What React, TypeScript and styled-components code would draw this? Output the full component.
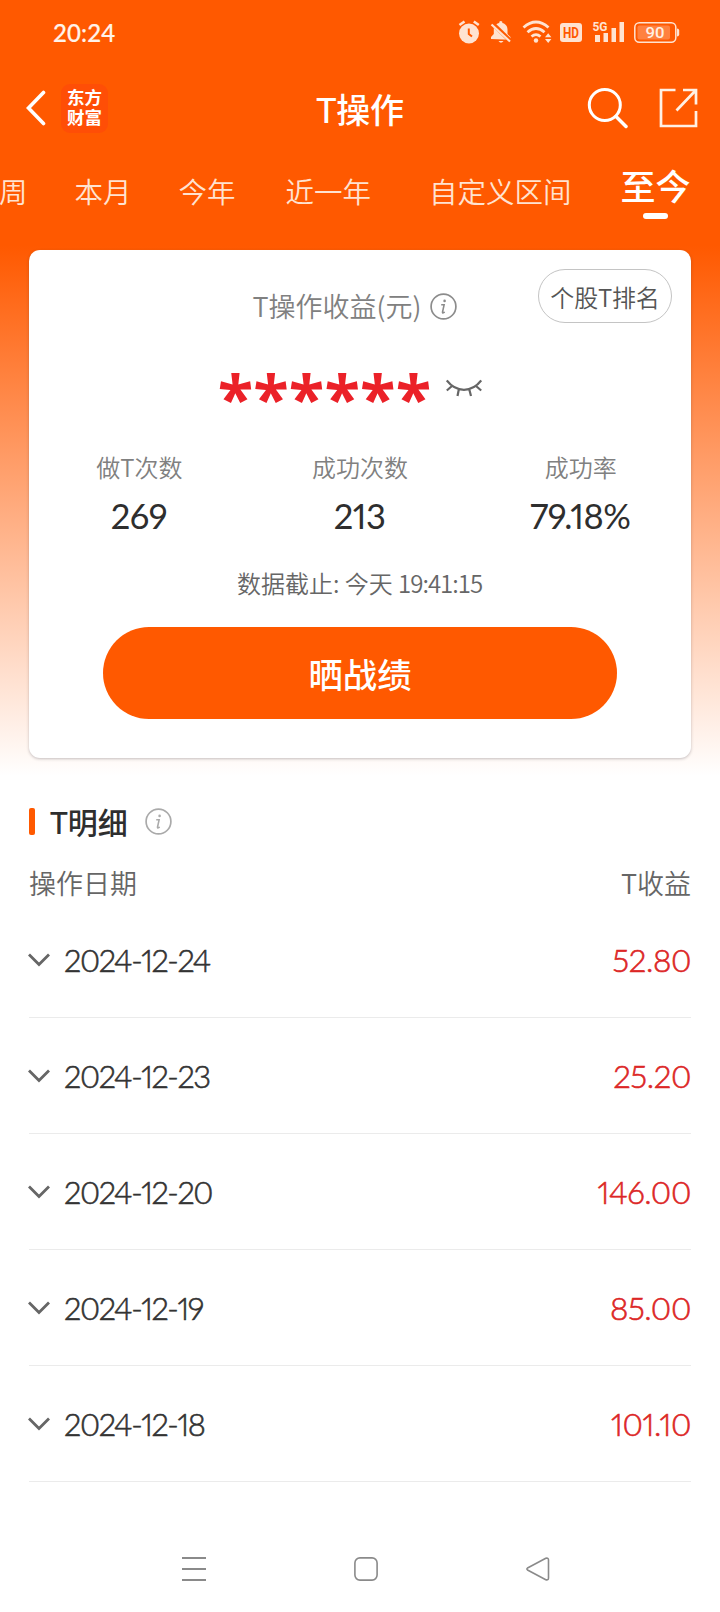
import React from 'react';
import styled, { createGlobalStyle } from 'styled-components';

const ORANGE = '#ff5900';
const TINT = '#ffe3d1';

const GlobalStyle = createGlobalStyle`
  * { box-sizing: border-box; }
  html, body { margin: 0; padding: 0; background: #fff; }
  body { font-family: Lato, "Noto Sans CJK SC", sans-serif; color: #333; }
  svg { display: block; flex: none; }
`;

const Page = styled.main`
  display: flex;
  flex-direction: column;
  width: 720px;
  height: 1612px;
  overflow: hidden;
  background: linear-gradient(to bottom, ${ORANGE} 0, ${ORANGE} 246px, #fff 776px);
  white-space: nowrap;
`;

const StatusBar = styled.div`
  display: flex;
  align-items: center;
  justify-content: space-between;
  height: 66px;
  padding: 0 40px 0 53px;
`;

const Clock = styled.span`
  margin-top: -2px;
  color: #fff3ea;
  font-size: 24px;
  font-weight: 500;
  letter-spacing: 0.1px;
  -webkit-text-stroke: 0.2px #fff3ea;
`;

const TopBar = styled.header`
  display: grid;
  grid-template-columns: 1fr auto 1fr;
  align-items: center;
  height: 84px;
  padding: 0 22px 0 26px;
`;

const TopLeft = styled.div`
  display: flex;
  align-items: center;
  gap: 15px;
`;

const Logo = styled.div`
  display: flex;
  flex-direction: column;
  align-items: center;
  width: 47px;
  height: 49px;
  padding-top: 3px;
  border-radius: 9px;
  background: #ff4e06;
`;

const LogoLine = styled.span`
  height: 20px;
  color: #fff;
  font: 700 17.5px/20px "Noto Sans CJK SC", sans-serif;
`;

const Title = styled.h1`
  margin: 3px 4px 0 0;
  color: #fff;
  font-size: 34px;
  font-weight: 500;
  line-height: 44px;
  letter-spacing: -0.3px;
`;

const TopRight = styled.div`
  display: flex;
  align-items: center;
  justify-content: flex-end;
  gap: 31px;
`;

const Tabs = styled.nav`
  display: flex;
  height: 100px;
  margin-left: -1px;
`;

const Tab = styled.button<{ $before: number }>`
  flex: none;
  height: 84px;
  margin: 0 0 0 ${(p) => p.$before}px;
  padding: 0;
  border: 0;
  background: none;
  color: ${TINT};
  font: 350 28.5px/83px Lato, "Noto Sans CJK SC", sans-serif;
`;

const ActiveTab = styled(Tab)`
  display: flex;
  flex-direction: column;
  align-items: center;
  color: #fff;
  font-size: 35px;
  font-weight: 500;
  line-height: 73px;
  &::after {
    content: '';
    width: 25px;
    height: 6px;
    margin-top: -10px;
    border-radius: 3px;
    background: #fff;
  }
`;

const Card = styled.section`
  position: relative;
  display: flex;
  flex-direction: column;
  align-items: center;
  height: 508px;
  margin: 0 29px;
  border-radius: 11px;
  background: #fff;
  box-shadow: 0 1px 3px rgba(60, 50, 60, 0.3);
`;

const RankButton = styled.button`
  position: absolute;
  top: 19px;
  right: 19px;
  width: 134px;
  height: 54px;
  padding: 2px 0 0;
  border: 1px solid #c4c4c4;
  border-radius: 27px;
  background: #fff;
  color: #555;
  font: 350 24px/50px "Noto Sans CJK SC", sans-serif;
  letter-spacing: -0.2px;
`;

const ProfitLabel = styled.div`
  display: flex;
  align-items: center;
  gap: 9px;
  height: 40px;
  margin: 36px 0 0 -10px;
  color: #808080;
  font: 350 27px/42px "Noto Sans CJK SC", sans-serif;
`;

const Masked = styled.div`
  display: flex;
  align-items: center;
  gap: 15px;
  height: 60px;
  margin: 23px 0 0 -20px;
  svg { margin-top: 18px; }
`;

const Stars = styled.span`
  height: 60px;
  color: #eb2128;
  font: 680 65px/96px "Open Sans", sans-serif;
  letter-spacing: 0.2px;
`;

const Stats = styled.div`
  display: grid;
  grid-template-columns: repeat(3, 1fr);
  width: 100%;
  margin-top: 40px;
`;

const Stat = styled.div`
  display: flex;
  flex-direction: column;
  align-items: center;
`;

const StatLabel = styled.span`
  height: 37px;
  color: #808080;
  font: 350 24px/36px "Noto Sans CJK SC", sans-serif;
`;

const StatValue = styled.strong`
  height: 61px;
  margin-left: -1px;
  color: #2e2e2e;
  font-size: 34.5px;
  font-weight: 400;
  font-feature-settings: 'pnum';
  line-height: 60px;
  letter-spacing: -0.5px;
`;

const Cutoff = styled.p`
  margin: 18px 0 0 -1px;
  color: #666;
  font: 350 24px/36px "Noto Sans CJK SC", sans-serif;
`;

const CutoffTime = styled.span`
  letter-spacing: -1px;
`;

const ShareButton = styled.button`
  width: 514px;
  height: 92px;
  margin-top: 26px;
  padding: 0 0 1px;
  border: 0;
  border-radius: 46px;
  background: ${ORANGE};
  color: #fff;
  font: 500 34.3px/88px "Noto Sans CJK SC", sans-serif;
`;

const Detail = styled.section`
  display: flex;
  flex-direction: column;
  padding: 0 29px;
`;

const DetailTitle = styled.h2`
  display: flex;
  align-items: center;
  height: 40px;
  margin: 43px 0 0;
  color: #2e2e2e;
  font-size: 30px;
  font-weight: 500;
  &::before {
    content: '';
    width: 6px;
    height: 27px;
    margin-right: 15px;
    border-radius: 2px;
    background: ${ORANGE};
  }
  svg { margin-left: 17px; }
`;

const ColumnHeads = styled.div`
  display: flex;
  justify-content: space-between;
  height: 61px;
  color: #666;
  font: 350 27px/84px "Noto Sans CJK SC", sans-serif;
`;

const Row = styled.div`
  display: flex;
  align-items: center;
  height: 116px;
  border-bottom: 1px solid #ebebeb;
  svg { margin-left: -1px; }
`;

const RowDate = styled.span`
  flex: 1;
  margin-left: 14px;
  color: #333;
  font-size: 31px;
  font-weight: 300;
  font-feature-settings: 'pnum';
  letter-spacing: -1.4px;
  -webkit-text-stroke: 0.6px #333;
`;

const RowAmount = styled.span`
  color: #dc2626;
  font-size: 31.5px;
  font-weight: 300;
  font-feature-settings: 'pnum';
  letter-spacing: -0.4px;
  -webkit-text-stroke: 0.6px #dc2626;
`;

const SystemNav = styled.footer`
  display: flex;
  justify-content: center;
  gap: 148px;
  margin-top: 74px;
  padding-left: 11px;
`;

const InfoIcon = ({ color }: { color: string }) => (
  <svg width="27" height="27" viewBox="0 0 27 27" fill="none" stroke={color}>
    <circle cx="13.5" cy="13.5" r="12.4" strokeWidth="1.7" />
    <circle cx="14.6" cy="7.9" r="1.3" fill={color} stroke="none" />
    <path d="M11.2 11.8h2.9l-1.6 7.4q-.1.9.8.6l1.5-.7" strokeWidth="1.6" />
  </svg>
);

const StatusIcons = () => (
  <svg width="226" height="30" viewBox="454 18 226 30" fill={TINT}>
    <circle cx="469" cy="33.5" r="10" />
    <path d="M459.5 25l5-3.5M473.8 21.5l5 3.5" stroke={TINT} strokeWidth="2.6" />
    <path d="M468.8 28.5v5.5l3.2 2.5" fill="none" stroke={ORANGE} strokeWidth="2" />
    <path d="M491 39v-2l2.8-3v-4.5c0-4 2.5-6 5.5-6.500v-1.200q1.500-1.800 3 0V23c3 .6 5.200 3 5.200 6.500V34l3 3v2.800zM498.500 41h5q-2.500 3.400-5 0z" />
    <path d="M492.500 23.500l18.500 18" stroke={ORANGE} strokeWidth="4.500" />
    <path d="M491.500 24.500l18.500 17" stroke={TINT} strokeWidth="2.200" />
    <g fill="none" stroke={TINT} strokeWidth="2.800">
      <path d="M523.500 27.500q12.500-11 25 0" />
      <path d="M527.500 32.300q8.500-7.500 17 0" />
      <path d="M531.500 36.500q4.500-3.800 9 0" />
    </g>
    <circle cx="536" cy="40.500" r="2.200" />
    <path d="M545 37.300l3.200-4 3.200 4zM545 39l3.200 4 3.200-4z" />
    <rect x="560" y="23" width="22" height="19" rx="3" />
    <text x="571" y="38" textAnchor="middle" fontFamily="Roboto, sans-serif" fontWeight="700" fontSize="14.500" textLength="16" lengthAdjust="spacingAndGlyphs" fill={ORANGE}>HD</text>
    <text x="592.500" y="31" fontFamily="Roboto, sans-serif" fontWeight="700" fontSize="13.500" textLength="15" lengthAdjust="spacingAndGlyphs">5G</text>
    <path d="M595 35h5v7h-5zM603.500 33h4.500v9h-4.500zM611.500 28h4.500v14h-4.500zM619.500 22h4.500v20h-4.500z" />
    <rect x="634.800" y="22.800" width="41" height="19.400" rx="4.500" fill="none" stroke={TINT} strokeWidth="1.500" />
    <rect x="637.500" y="25.500" width="32.500" height="14" rx="2" fill="#ff8140" />
    <path d="M677 28.500q2.200 0 2.200 2v4q0 2-2.200 2z" />
    <text x="655" y="38" textAnchor="middle" fontFamily="Roboto, sans-serif" fontWeight="500" fontSize="15.500" textLength="19" lengthAdjust="spacingAndGlyphs" fill="#fff0e4">90</text>
  </svg>
);

const BackIcon = () => (
  <svg width="20" height="36" viewBox="0 0 20 36" fill="none" stroke="#fff" strokeWidth="3.600" strokeLinecap="round">
    <path d="M17.500 2.500L2.500 18l15 15.500" />
  </svg>
);

const SearchIcon = () => (
  <svg width="41" height="42" viewBox="0 0 41 42" fill="none" stroke="#fff" strokeWidth="3" strokeLinecap="round">
    <circle cx="17.800" cy="18" r="15.500" />
    <path d="M29 29.500l10 10" strokeWidth="3.500" />
  </svg>
);

const ExportIcon = () => (
  <svg width="39" height="40" viewBox="0 0 39 40" fill="none" stroke="#fff0e4" strokeWidth="2.700">
    <path d="M16.500 2H2v36h35V23M24 2h13v14.500M37 2L17.500 22.500" />
  </svg>
);

const ClosedEyeIcon = () => (
  <svg width="36" height="19" viewBox="0 0 36 19" fill="none" stroke="#666" strokeWidth="2.200">
    <path d="M.8 1.500Q8 10.800 18 10.800T35.200 1.500M.8 11.500L6 7M12.800 10.500L11.500 17M23.300 10.500l1.700 6.500M30 7l5.200 4.500" />
  </svg>
);

const ChevronIcon = () => (
  <svg width="22" height="14" viewBox="0 0 22 14" fill="none" stroke="#666" strokeWidth="2.800">
    <path d="M1 1.500l10 10 10-10" />
  </svg>
);

const tabs = [
  { label: '周', before: 0 },
  { label: '本月', before: 47 },
  { label: '今年', before: 47 },
  { label: '近一年', before: 50 },
  { label: '自定义区间', before: 58 },
];

const stats = [
  { label: '做T次数', value: '269' },
  { label: '成功次数', value: '213' },
  { label: '成功率', value: '79.18%' },
];

const rows = [
  { date: '2024-12-24', amount: '52.80' },
  { date: '2024-12-23', amount: '25.20' },
  { date: '2024-12-20', amount: '146.00' },
  { date: '2024-12-19', amount: '85.00' },
  { date: '2024-12-18', amount: '101.10' },
];

export default function App() {
  return (
    <>
      <GlobalStyle />
      <Page>
        <StatusBar>
          <Clock>20:24</Clock>
          <StatusIcons />
        </StatusBar>
        <TopBar>
          <TopLeft>
            <BackIcon />
            <Logo>
              <LogoLine>东方</LogoLine>
              <LogoLine>财富</LogoLine>
            </Logo>
          </TopLeft>
          <Title>T操作</Title>
          <TopRight>
            <SearchIcon />
            <ExportIcon />
          </TopRight>
        </TopBar>
        <Tabs>
          {tabs.map((t) => (
            <Tab key={t.label} $before={t.before}>{t.label}</Tab>
          ))}
          <ActiveTab $before={49}>至今</ActiveTab>
        </Tabs>
        <Card>
          <RankButton>个股T排名</RankButton>
          <ProfitLabel>
            T操作收益(元)
            <InfoIcon color="#8c8c8c" />
          </ProfitLabel>
          <Masked>
            <Stars>******</Stars>
            <ClosedEyeIcon />
          </Masked>
          <Stats>
            {stats.map((s) => (
              <Stat key={s.label}>
                <StatLabel>{s.label}</StatLabel>
                <StatValue>{s.value}</StatValue>
              </Stat>
            ))}
          </Stats>
          <Cutoff>数据截止: 今天 <CutoffTime>19:41:15</CutoffTime></Cutoff>
          <ShareButton>晒战绩</ShareButton>
        </Card>
        <Detail>
          <DetailTitle>
            T明细
            <InfoIcon color="#aaa" />
          </DetailTitle>
          <ColumnHeads>
            <span>操作日期</span>
            <span>T收益</span>
          </ColumnHeads>
          {rows.map((r) => (
            <Row key={r.date}>
              <ChevronIcon />
              <RowDate>{r.date}</RowDate>
              <RowAmount>{r.amount}</RowAmount>
            </Row>
          ))}
        </Detail>
        <SystemNav>
          <svg width="24" height="26" viewBox="0 0 24 26" stroke="#8a8a8a" strokeWidth="1.800">
            <path d="M0 2h24M0 13h24M0 24h24" />
          </svg>
          <svg width="24" height="26" viewBox="0 0 24 26" fill="none" stroke="#8a8a8a" strokeWidth="1.600">
            <rect x=".9" y="1.900" width="22.200" height="22.200" rx="5" />
          </svg>
          <svg width="24" height="26" viewBox="0 0 24 26" fill="none" stroke="#8a8a8a" strokeWidth="1.600" strokeLinejoin="round">
            <path d="M1.500 12L19.800 2.300Q22.500 1.500 22.500 4V22q0 2.500-2.700 1.700L1.500 14Q.3 13 1.500 12z" />
          </svg>
        </SystemNav>
      </Page>
    </>
  );
}
